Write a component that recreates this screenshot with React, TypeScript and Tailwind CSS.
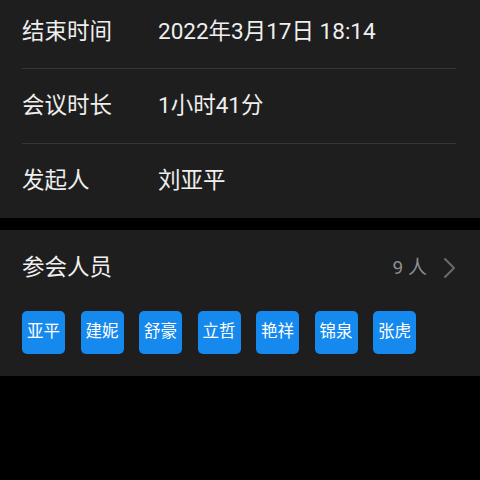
import React from "react"

const font = { fontFamily: "Roboto, 'Noto Sans CJK SC', sans-serif" }

const rows = [
  { label: "结束时间", value: "2022年3月17日 18:14", h: "h-[68px] pb-[4px]" },
  { label: "会议时长", value: "1小时41分", h: "h-[74px]" },
  { label: "发起人", value: "刘亚平", h: "h-[74px]" },
]

const people = ["亚平", "建妮", "舒豪", "立哲", "艳祥", "锦泉", "张虎"]

export default function App() {
  return (
    <div className="w-[480px] h-[480px] bg-black overflow-hidden" style={font}>
      <div className="bg-[#1e1e1e] h-[218px] px-[22px]">
        {rows.map((r, i) => (
          <div key={r.label}>
            {i > 0 && <div className="h-px bg-[#363636] mr-[2px]" />}
            <div className={`${r.h} flex items-center text-[22.5px] text-[#efefef]`}>
              <span className="w-[136px]">{r.label}</span>
              <span>{r.value}</span>
            </div>
          </div>
        ))}
      </div>

      <div className="mt-[12px] bg-[#1e1e1e] h-[146px] px-[22px]">
        <div className="h-[76px] flex items-center justify-between">
          <span className="text-[22.5px] text-[#efefef]">参会人员</span>
          <div className="flex items-center text-[#8e8e8e]">
            <span className="text-[19px] mr-[16px]">9 人</span>
            <svg width="13" height="22" viewBox="0 0 13 22" className="mr-[2px]">
              <polyline points="2,2 11,11 2,20" fill="none" stroke="#6a6a6a" strokeWidth="2" strokeLinecap="round" strokeLinejoin="round" />
            </svg>
          </div>
        </div>
        <div className="flex gap-[15.5px] pt-[5px]">
          {people.map((p) => (
            <div
              key={p}
              className="w-[43px] h-[43px] rounded-[5px] bg-[#1589ee] flex items-center justify-center text-white text-[16.5px] leading-none"
            >
              {p}
            </div>
          ))}
        </div>
      </div>
    </div>
  )
}
